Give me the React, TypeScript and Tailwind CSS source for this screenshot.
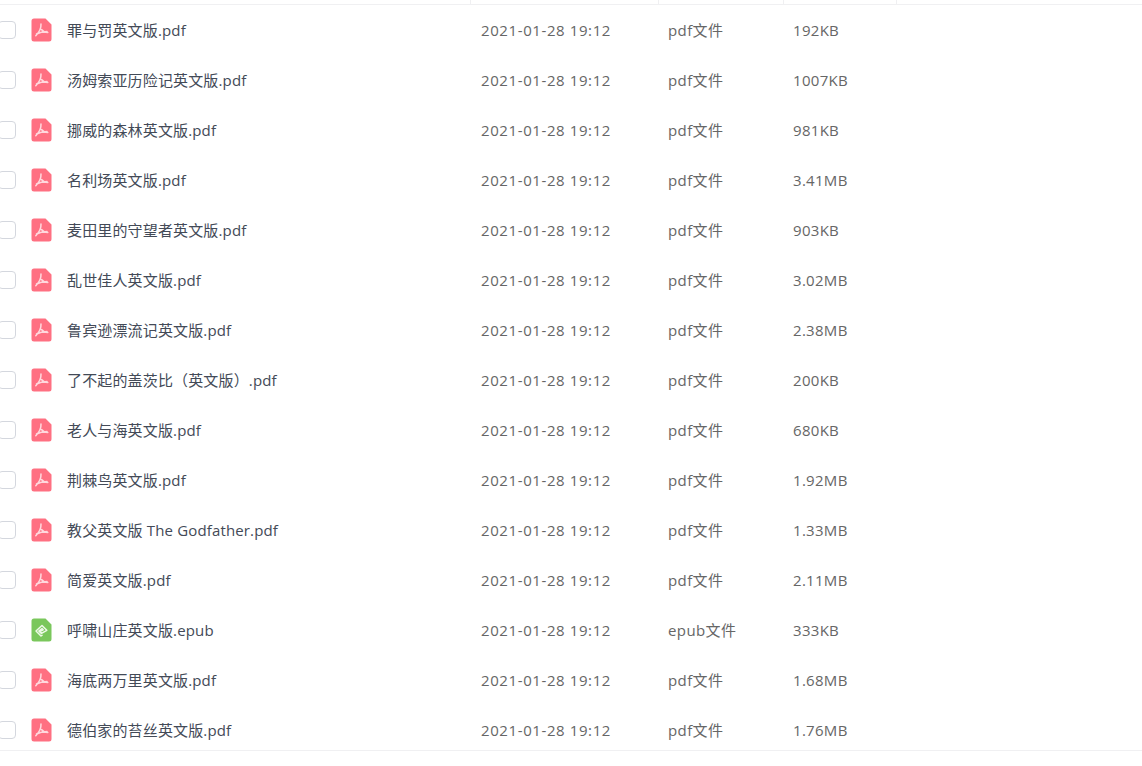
const files = [
  { name: '罪与罚英文版.pdf', type: 'pdf文件', size: '192KB' },
  { name: '汤姆索亚历险记英文版.pdf', type: 'pdf文件', size: '1007KB' },
  { name: '挪威的森林英文版.pdf', type: 'pdf文件', size: '981KB' },
  { name: '名利场英文版.pdf', type: 'pdf文件', size: '3.41MB' },
  { name: '麦田里的守望者英文版.pdf', type: 'pdf文件', size: '903KB' },
  { name: '乱世佳人英文版.pdf', type: 'pdf文件', size: '3.02MB' },
  { name: '鲁宾逊漂流记英文版.pdf', type: 'pdf文件', size: '2.38MB' },
  { name: '了不起的盖茨比（英文版）.pdf', type: 'pdf文件', size: '200KB' },
  { name: '老人与海英文版.pdf', type: 'pdf文件', size: '680KB' },
  { name: '荆棘鸟英文版.pdf', type: 'pdf文件', size: '1.92MB' },
  { name: '教父英文版 The Godfather.pdf', type: 'pdf文件', size: '1.33MB' },
  { name: '简爱英文版.pdf', type: 'pdf文件', size: '2.11MB' },
  { name: '呼啸山庄英文版.epub', type: 'epub文件', size: '333KB' },
  { name: '海底两万里英文版.pdf', type: 'pdf文件', size: '1.68MB' },
  { name: '德伯家的苔丝英文版.pdf', type: 'pdf文件', size: '1.76MB' },
];

function PdfIcon() {
  return (
    <svg width="21" height="24" viewBox="0 0 21 24" className="shrink-0">
      <path d="M3 0.5H14.5L20.5 6.5V21a2.5 2.5 0 0 1-2.5 2.5H3A2.5 2.5 0 0 1 .5 21V3A2.5 2.5 0 0 1 3 .5Z" fill="#ff7082" />
      <path d="M10 6C10.2 9.5 8 14.5 4.8 17.8M10.5 11.5C12 13.5 14 14.5 16.8 14.5M5.5 16C8.5 14.5 12 13.7 16 13.5" fill="none" stroke="#ffd9de" strokeWidth="1.5" strokeLinecap="round" />
    </svg>
  );
}

function EpubIcon() {
  return (
    <svg width="21" height="24" viewBox="0 0 21 24" className="shrink-0">
      <path d="M3 0.5H14.5L20.5 6.5V21a2.5 2.5 0 0 1-2.5 2.5H3A2.5 2.5 0 0 1 .5 21V3A2.5 2.5 0 0 1 3 .5Z" fill="#7ac75c" />
      <path d="M11.5 16.8L10 18L5 13L11 7.5L15.8 12.3L10.5 15.3L8.8 13.5L12.2 11.8L11 10.6L7.8 13L10 15.3" fill="none" stroke="#eef9e8" strokeWidth="1.5" strokeLinejoin="round" />
    </svg>
  );
}

export default function App() {
  return (
    <div className="h-[766px] w-[1142px] overflow-hidden bg-white font-['Open_Sans','Noto_Sans_CJK_SC',sans-serif] text-[15px]">
      {/* Header edge */}
      <div className="flex h-[5px] border-b border-[#f0f0f2]">
        <div className="w-[471px] border-r border-[#f0f0f2]" />
        <div className="w-[188px] border-r border-[#f0f0f2]" />
        <div className="w-[125px] border-r border-[#f0f0f2]" />
        <div className="w-[113px] border-r border-[#f0f0f2]" />
      </div>

      {/* File rows */}
      <div className="h-[746px] overflow-hidden border-b border-[#f0f0f2]">
        {files.map((file) => (
          <div key={file.name} className="flex h-[50px] items-center">
            <div className="ml-[-2px] h-[18px] w-[18px] shrink-0 rounded-[4px] border border-[#d4d7de] bg-white" />
            <div className="ml-[15px] flex w-[450px] shrink-0 items-center">
              {file.type === 'pdf文件' ? <PdfIcon /> : <EpubIcon />}
              <span className="ml-[15px] text-[#434a57] tracking-[0.15px]">{file.name}</span>
            </div>
            <div className="w-[187px] shrink-0 text-[#666] tracking-[0.6px]">2021-01-28 19:12</div>
            <div className="w-[125px] shrink-0 text-[#666] tracking-[0.4px]">{file.type}</div>
            <div className="text-[#666] tracking-[0.3px]">{file.size}</div>
          </div>
        ))}
      </div>
    </div>
  );
}
